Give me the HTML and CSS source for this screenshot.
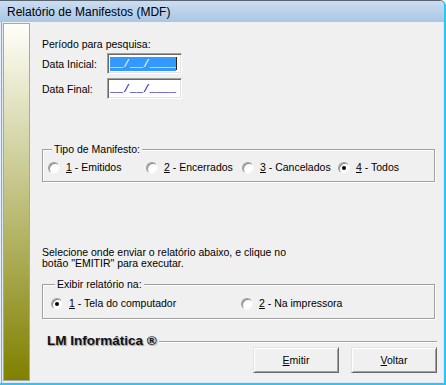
FILE: index.html
```html
<!DOCTYPE html>
<html lang="pt-BR">
<head>
    <meta charset="UTF-8">
    <title>Relatório de Manifestos (MDF)</title>
    <link rel="stylesheet" href="styles.css">
</head>
<body>
    <div class="window">
        <div class="titlebar">Relatório de Manifestos (MDF)</div>
        <div class="client">
            <div class="sidebar"></div>
            <div class="content">
                <div class="line">Período para pesquisa:</div>

                <div class="field-row first">
                    <label>Data Inicial:</label>
                    <div class="date-input"><span class="sel">__/__/____</span><span class="caret"></span></div>
                </div>
                <div class="field-row">
                    <label>Data Final:</label>
                    <div class="date-input"><span class="mask">__/__/____</span></div>
                </div>

                <fieldset class="group tipo">
                    <legend>Tipo de Manifesto:</legend>
                    <div class="options">
                        <div class="option"><span class="radio"></span><span><u>1</u> - Emitidos</span></div>
                        <div class="option"><span class="radio"></span><span><u>2</u> - Encerrados</span></div>
                        <div class="option"><span class="radio"></span><span><u>3</u> - Cancelados</span></div>
                        <div class="option"><span class="radio checked"></span><span><u>4</u> - Todos</span></div>
                    </div>
                </fieldset>

                <p class="hint">Selecione onde enviar o relatório abaixo, e clique no<br>botão "EMITIR" para executar.</p>

                <fieldset class="group destino">
                    <legend>Exibir relatório na:</legend>
                    <div class="options">
                        <div class="option"><span class="radio checked"></span><span><u>1</u> - Tela do computador</span></div>
                        <div class="option"><span class="radio"></span><span><u>2</u> - Na impressora</span></div>
                    </div>
                </fieldset>

                <div class="brand-row">
                    <span class="brand">LM Informática ®</span>
                    <span class="rule"></span>
                </div>

                <div class="buttons">
                    <button><u>E</u>mitir</button>
                    <button><u>V</u>oltar</button>
                </div>
            </div>
        </div>
    </div>
</body>
</html>
```

FILE: styles.css
```css
body {
    margin: 0;
    font-family: "Liberation Sans", Arial, sans-serif;
    font-size: 10.5px;
    color: #000;
    background: #fff;
}
.window {
    width: 446px;
    height: 385px;
    box-sizing: border-box;
    display: flex;
    flex-direction: column;
    border-top: 1px solid #5a6470;
    border-right: 2px solid #2fc4f1;
    border-bottom: 2px solid #2fc4f1;
    border-radius: 0 6px 0 0;
    overflow: hidden;
    background: linear-gradient(to right, #e6eef7 0 1px, #8ea8cf 1px 2px, #dde7f3 2px);
}
.titlebar {
    height: 21px;
    padding-left: 7px;
    display: flex;
    align-items: center;
    font-size: 12px;
    background: linear-gradient(#cbddf0, #a9c6e5);
}
.client {
    flex: 1;
    display: flex;
    margin: 0 1px 1px 3px;
    background: #f0f0f0;
}
.sidebar {
    width: 27px;
    box-sizing: border-box;
    margin: 1px 0;
    border: 1px solid #a8a8a8;
    background: linear-gradient(#fffffa, #808000);
}
.content {
    flex: 1;
    display: flex;
    flex-direction: column;
    padding: 16px 8px 0 12px;
}
.line {
    line-height: 13px;
}
.field-row {
    display: flex;
    align-items: center;
    height: 21px;
    margin-top: 4px;
}
.field-row.first {
    margin-top: 2px;
}
.field-row label {
    width: 65px;
}
.date-input {
    width: 75px;
    height: 21px;
    box-sizing: border-box;
    display: flex;
    align-items: center;
    padding-left: 2px;
    background: #fff;
    border: 1px solid;
    border-color: #a0a0a0 #fff #fff #a0a0a0;
    box-shadow: inset 1px 1px 0 #696969, inset -1px -1px 0 #e3e3e3;
    font-family: "Liberation Mono", "Courier New", monospace;
    font-size: 11px;
    line-height: 14px;
}
.sel {
    background: #3399ff;
    color: #fff;
}
.caret {
    width: 1px;
    height: 13px;
    background: #402000;
}
.mask {
    color: #0000c0;
}
.group {
    margin: 44px 0 0;
    padding: 5px 0 7px 5px;
    border: 1px solid #a0a0a0;
    box-shadow: inset 1px 1px 0 #fff, 1px 1px 0 #fff;
}
.group legend {
    margin-left: 4px;
    padding: 0 2px;
    line-height: 13px;
    background: #f0f0f0;
}
.options {
    display: grid;
    grid-template-columns: 98px 96px 96px auto;
    line-height: 13px;
}
.destino {
    margin-top: 9px;
    padding: 6px 0 8px 8px;
}
.destino .options {
    grid-template-columns: 190px auto;
}
.option {
    display: flex;
    align-items: center;
    gap: 6px;
}
.radio {
    position: relative;
    width: 12px;
    height: 12px;
    box-sizing: border-box;
    border-radius: 50%;
    background: #fff;
    border: 1px solid;
    border-color: #a0a0a0 #f4f4f4 #f4f4f4 #a0a0a0;
    box-shadow: inset 1px 1px 0 #8a8a8a;
}
.radio.checked::after {
    content: "";
    position: absolute;
    left: 3px;
    top: 3px;
    width: 4px;
    height: 4px;
    border-radius: 50%;
    background: #000;
}
.hint {
    margin: 65px 0 0;
    line-height: 11px;
}
.brand-row {
    display: flex;
    align-items: center;
    margin: 16px -2px 0 5px;
    line-height: 12px;
}
.brand {
    font-weight: bold;
    font-size: 13.5px;
    color: #111;
    text-shadow: 1px 1px 1px #9a9a9a;
}
.rule {
    flex: 1;
    height: 1px;
    margin-left: 2px;
    background: #a0a0a0;
    box-shadow: 0 1px 0 #fff;
}
.buttons {
    display: flex;
    justify-content: flex-end;
    gap: 12px;
    margin-right: -2px;
}
.buttons button {
    width: 86px;
    height: 26px;
    padding: 0;
    font-family: inherit;
    font-size: 10.5px;
    color: #000;
    background: #f0f0f0;
    border: 1px solid;
    border-color: #e3e3e3 #696969 #696969 #e3e3e3;
    box-shadow: inset 1px 1px 0 #fff, inset -1px -1px 0 #a0a0a0;
    border-radius: 0;
}
```
